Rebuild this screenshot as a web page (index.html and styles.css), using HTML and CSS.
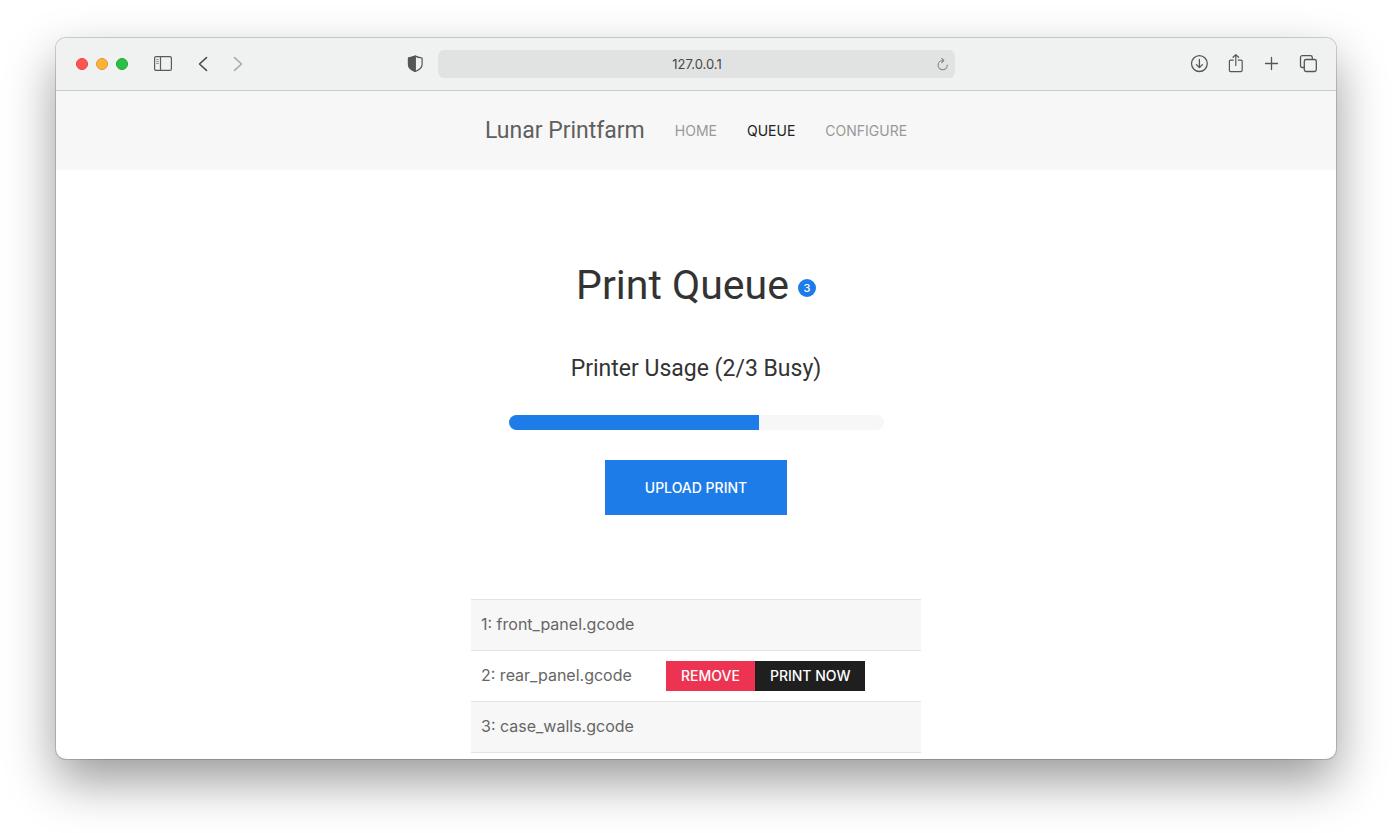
FILE: index.html
```html
<!DOCTYPE html>
<html lang="en">
<head>
<meta charset="utf-8">
<meta name="viewport" content="width=device-width, initial-scale=1">
<title>Lunar Printfarm</title>
<link rel="stylesheet" href="styles.css">
</head>
<body>
<div class="window">
  <header class="toolbar">
    <div class="toolbar-side">
      <div class="lights">
        <button class="light light-close" aria-label="Close"></button>
        <button class="light light-min" aria-label="Minimize"></button>
        <button class="light light-zoom" aria-label="Zoom"></button>
      </div>
      <button class="tool tool-sidebar" aria-label="Sidebar">
        <svg width="20" height="20" viewBox="0 0 20 20" fill="none" stroke="#5a5c5b" stroke-width="1.2"><rect x="1.600" y="2.600" width="16.800" height="13.800" rx="1.500"/><path d="M7.500 2.500v14"/><path d="M3.300 5.500h2.400M3.300 7.500h2.400M3.300 9.500h2.400" stroke="#8a8c8b" stroke-width="1"/></svg>
      </button>
      <button class="tool tool-back" aria-label="Back">
        <svg width="20" height="20" viewBox="0 0 20 20" fill="none" stroke="#4c4e4d" stroke-width="1.6" stroke-linecap="round" stroke-linejoin="round"><path d="M13.500 3.600 6.500 10l7 6.400"/></svg>
      </button>
      <button class="tool tool-forward" aria-label="Forward">
        <svg width="20" height="20" viewBox="0 0 20 20" fill="none" stroke="#a9abaa" stroke-width="1.6" stroke-linecap="round" stroke-linejoin="round"><path d="M6.500 3.600l7 6.400-7 6.400"/></svg>
      </button>
      <button class="tool tool-shield" aria-label="Privacy report">
        <svg width="20" height="20" viewBox="0 0 20 20" fill="none" stroke="#555756" stroke-width="1.2" stroke-linejoin="round"><path d="M10.300 2.100c2 1.100 4.300 1.600 6.800 1.900v6.500c0 3-2.600 5.200-6.800 7-4.200-1.800-6.800-4-6.800-7V4c2.500-.3 4.800-.8 6.800-1.900z"/><path d="M10.300 2.100v15.400c-4.200-1.800-6.800-4-6.800-7V4c2.500-.3 4.800-.8 6.800-1.900z" fill="#555756"/></svg>
      </button>
    </div>
    <div class="address">
      <input class="address-input" type="text" value="127.0.0.1" aria-label="Address">
      <button class="reload" aria-label="Reload">
        <svg width="14" height="14" viewBox="0 0 14 14" fill="none" stroke="#858786" stroke-width="1.1" stroke-linecap="round" stroke-linejoin="round"><path d="M12.300 8.100a4.600 4.600 0 1 1-4.600-4.600h1.100M6.800 1.500l2 2-2 2"/></svg>
      </button>
    </div>
    <div class="toolbar-side toolbar-end">
      <button class="tool" aria-label="Downloads">
        <svg width="20" height="20" viewBox="0 0 20 20" fill="none" stroke="#555756" stroke-width="1.3" stroke-linecap="round" stroke-linejoin="round"><circle cx="9.400" cy="9.600" r="7.900"/><path d="M9.400 5.500v8M6.400 10.600l3 3 3-3"/></svg>
      </button>
      <button class="tool" aria-label="Share">
        <svg width="20" height="20" viewBox="0 0 20 20" fill="none" stroke="#555756" stroke-width="1.2" stroke-linecap="round" stroke-linejoin="round"><path d="M7.300 6.100H4.600a1.200 1.200 0 0 0-1.200 1.200v9a1.300 1.300 0 0 0 1.300 1.300h10.200a1.300 1.300 0 0 0 1.300-1.300v-9a1.200 1.200 0 0 0-1.200-1.200h-2.700M9.800 11.600V.9M7 3.300 9.800.7l2.800 2.600"/></svg>
      </button>
      <button class="tool" aria-label="New tab">
        <svg width="20" height="20" viewBox="0 0 20 20" fill="none" stroke="#555756" stroke-width="1.300" stroke-linecap="round"><path d="M9.500 3.500v12M3.500 9.500h12"/></svg>
      </button>
      <button class="tool" aria-label="Tab overview">
        <svg width="20" height="20" viewBox="0 0 20 20" fill="none" stroke="#555756" stroke-width="1.300" stroke-linejoin="round"><rect x="6.300" y="5.500" width="12" height="12" rx="1.800"/><path d="M6.300 13.500H4.300a1.800 1.800 0 0 1-1.800-1.800V3.400a1.800 1.800 0 0 1 1.800-1.800h8.200a1.800 1.800 0 0 1 1.800 1.800v2.100"/></svg>
      </button>
    </div>
  </header>
  <div class="page">
    <nav class="nav">
      <a class="brand" href="#">Lunar Printfarm</a>
      <a class="nav-link" href="#">HOME</a>
      <a class="nav-link nav-link-active" href="#" aria-current="page">QUEUE</a>
      <a class="nav-link" href="#">CONFIGURE</a>
    </nav>
    <main class="main">
      <h1 class="title">Print Queue <span class="badge">3</span></h1>
      <h2 class="usage" id="usage">Printer Usage (2/3 Busy)</h2>
      <progress class="progress" max="3" value="2" aria-labelledby="usage"></progress>
      <button class="button button-upload">UPLOAD PRINT</button>
      <table class="queue">
        <tbody>
          <tr><td class="file">1: front_panel.gcode</td><td class="actions"></td></tr>
          <tr><td class="file">2: rear_panel.gcode</td><td class="actions"><div class="group"><button class="button button-remove">REMOVE</button><button class="button button-now">PRINT NOW</button></div></td></tr>
          <tr><td class="file">3: case_walls.gcode</td><td class="actions"></td></tr>
        </tbody>
      </table>
    </main>
  </div>
</div>
</body>
</html>
```
FILE: styles.css
```css
* { box-sizing: border-box; }

body {
  margin: 0;
  height: 100vh;
  padding: 38px 56px 74px;
  background: #fff;
  color: #666;
  font-family: Inter, "Liberation Sans", sans-serif;
  font-size: 16px;
  overflow: hidden;
}

button { border: 0; padding: 0; background: none; font: inherit; cursor: pointer; }
a { text-decoration: none; }

.window {
  display: flex;
  flex-direction: column;
  height: 100%;
  border-radius: 10px;
  overflow: hidden;
  background: #fff;
  box-shadow: 0 0 0 1px rgba(0, 0, 0, .17), 0 22px 50px rgba(0, 0, 0, .4);
}

.toolbar {
  display: grid;
  grid-template-columns: 1fr minmax(160px, 517px) 1fr;
  flex: none;
  align-items: center;
  height: 53px;
  background: #f0f2f1;
  border-bottom: 1px solid #c9cbca;
}

.toolbar-side { display: flex; align-items: center; padding: 0 13px 0 20px; }
.toolbar-end { justify-content: flex-end; gap: 16px; padding: 0 18px 0 0; }

.lights { display: flex; gap: 8px; margin-right: 25px; }
.light { width: 12px; height: 12px; border-radius: 50%; border: 1px solid; }
.light-close { background: #ff5650; border-color: #e2443f; }
.light-min { background: #fdb23c; border-color: #e09a2d; }
.light-zoom { background: #29c142; border-color: #1fa835; }

.tool { display: flex; width: 20px; height: 20px; }
.tool-sidebar { margin-right: 20px; }
.tool-back { margin-right: 15px; }
.tool-shield { margin-left: auto; }

.address {
  display: flex;
  align-items: center;
  height: 28px;
  padding: 0 6px 0 22px;
  border-radius: 6px;
  background: #e1e3e2;
}

.address-input {
  flex: 1;
  min-width: 0;
  border: 0;
  padding: 0;
  background: none;
  color: #464847;
  font: 13px Inter, sans-serif;
  text-align: center;
}

.reload { display: flex; }

.page { flex: 1; min-height: 0; overflow: hidden; }

.nav {
  display: flex;
  align-items: center;
  justify-content: center;
  gap: 30px;
  height: 79px;
  background: #f7f7f7;
}

.brand, .title, .usage { font-family: Roboto, Inter, sans-serif; }
.brand { color: #5f5f5f; font-size: 23px; }
.nav-link { color: #999; font-size: 14px; }
.nav-link-active { color: #222; }

.main {
  display: flex;
  flex-direction: column;
  align-items: center;
  padding-top: 90px;
}

.title, .usage { margin: 0; color: #333; font-weight: 400; }

.title {
  display: flex;
  align-items: center;
  gap: 9px;
  font-size: 41px;
  line-height: 50px;
}

.badge {
  width: 18px;
  height: 18px;
  margin-top: 6px;
  border-radius: 50%;
  background: #1e7ce8;
  color: #fff;
  font-family: Inter, sans-serif;
  font-size: 11px;
  font-weight: 500;
  line-height: 18px;
  text-align: center;
}

.usage { margin-top: 42px; font-size: 23px; line-height: 34px; }

.progress {
  appearance: none;
  width: 375px;
  height: 15px;
  margin: 29px 0 30px;
  border: 0;
  border-radius: 8px;
  overflow: hidden;
  background: #f7f7f7;
}

.progress::-webkit-progress-bar { background: #f7f7f7; }
.progress::-webkit-progress-value { background: #1e7ce8; }

.button { padding: 0 15px; color: #fff; font-size: 14px; font-weight: 500; line-height: 30px; }
.button-upload { padding: 0 40px; background: #1e7ce8; line-height: 55px; }
.button-remove { background: #ec3452; }
.button-now { background: #1f1f1f; }

.queue { width: 450px; margin-top: 84px; border-collapse: collapse; }
.queue tr { height: 51px; border-top: 1px solid #e3e3e3; }
.queue tr:last-child { border-bottom: 1px solid #e3e3e3; }
.queue tr:nth-child(odd) { background: #f7f7f7; }
.file { width: 185px; padding: 0 10px 2px; }
.actions { padding: 0 10px; }
.group { display: flex; }
```
